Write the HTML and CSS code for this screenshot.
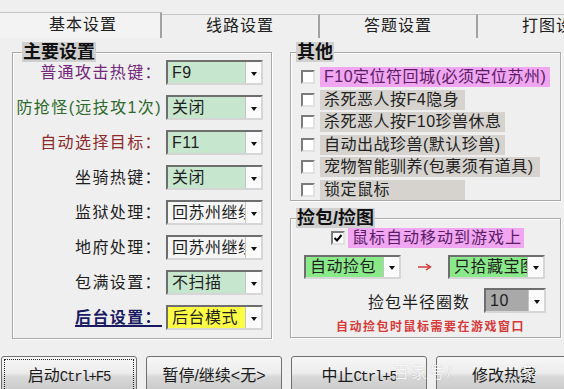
FILE: index.html
```html
<!DOCTYPE html>
<html lang="zh-CN">
<head>
<meta charset="utf-8">
<title>基本设置</title>
<link rel="stylesheet" href="styles.css">
</head>
<body>
<div class="tabs">
  <div class="tab active">基本设置</div>
  <div class="tab">线路设置</div>
  <div class="tab">答题设置</div>
  <div class="tab">打图设置</div>
</div>

<div class="panel">
  <section class="group main-group">
    <div class="group-title">主要设置</div>
    <div class="rows">
      <div class="row"><span class="lbl c-purple">普通攻击热键：</span><div class="combo green"><span class="val">F9</span><span class="drop"></span></div></div>
      <div class="row"><span class="lbl c-green">防抢怪(远技攻1次)</span><div class="combo green"><span class="val">关闭</span><span class="drop"></span></div></div>
      <div class="row"><span class="lbl c-red">自动选择目标：</span><div class="combo green"><span class="val">F11</span><span class="drop"></span></div></div>
      <div class="row"><span class="lbl">坐骑热键：</span><div class="combo green"><span class="val">关闭</span><span class="drop"></span></div></div>
      <div class="row"><span class="lbl">监狱处理：</span><div class="combo light"><span class="val">回苏州继续</span><span class="drop"></span></div></div>
      <div class="row"><span class="lbl">地府处理：</span><div class="combo light"><span class="val">回苏州继续</span><span class="drop"></span></div></div>
      <div class="row"><span class="lbl">包满设置：</span><div class="combo green"><span class="val">不扫描</span><span class="drop"></span></div></div>
      <div class="row"><span class="lbl c-navy">后台设置：</span><div class="combo yellow"><span class="val">后台模式</span><span class="drop"></span></div></div>
    </div>
  </section>

  <div class="right-col">
    <section class="group other-group">
      <div class="group-title small-indent">其他</div>
      <div class="checks">
        <div class="check"><span class="box"></span><span class="ctext pink w230">F10定位符回城(必须定位苏州)</span></div>
        <div class="check"><span class="box"></span><span class="ctext w145">杀死恶人按F4隐身</span></div>
        <div class="check"><span class="box"></span><span class="ctext w185">杀死恶人按F10珍兽休息</span></div>
        <div class="check"><span class="box"></span><span class="ctext w185">自动出战珍兽(默认珍兽)</span></div>
        <div class="check"><span class="box"></span><span class="ctext w220">宠物智能驯养(包裹须有道具)</span></div>
        <div class="check"><span class="box"></span><span class="ctext w145">锁定鼠标</span></div>
      </div>
    </section>

    <section class="group pick-group">
      <div class="group-title small-indent">捡包/捡图</div>
      <div class="check pick-check">
        <span class="box checked"><svg width="10" height="10" viewBox="0 0 10 10"><polyline points="1.5,5 4,7.5 8.5,2" fill="none" stroke="#000" stroke-width="2"/></svg></span>
        <span class="ctext pink w176">鼠标自动移动到游戏上</span>
      </div>
      <div class="combo-row">
        <div class="combo bright"><span class="val">自动捡包</span><span class="drop"></span></div>
        <span class="arrow"><svg width="14" height="8" viewBox="0 0 14 8"><line x1="0" y1="4" x2="12" y2="4" stroke="#d03030" stroke-width="1.4"/><polyline points="8,1 12.5,4 8,7" fill="none" stroke="#d03030" stroke-width="1.4"/></svg></span>
        <div class="combo bright"><span class="val">只拾藏宝图</span><span class="drop"></span></div>
      </div>
      <div class="radius-row">
        <span class="rlabel">捡包半径圈数</span>
        <div class="combo gray"><span class="val">10</span><span class="drop"></span></div>
      </div>
      <div class="note">自动捡包时鼠标需要在游戏窗口</div>
    </section>
  </div>
</div>

<div class="buttons">
  <div class="btn focused">启动<span class="mono">Ctrl+F5</span></div>
  <div class="btn">暂停/继续&lt;无&gt;</div>
  <div class="btn">中止<span class="mono">Ctrl+5</span></div>
  <div class="btn">修改热键</div>
</div>

<div class="watermark"><span>百家号/</span><span class="wm-end">家</span></div>
</body>
</html>
```

FILE: styles.css
```css
body {
  margin: 0;
  width: 564px;
  height: 389px;
  overflow: hidden;
  position: relative;
  background: #efefef;
  font-family: "Liberation Sans", "Noto Sans CJK SC", sans-serif;
  font-size: 16px;
  color: #1e1e1e;
}

/* tabs */
.tabs {
  display: flex;
  margin-top: 12px;
  height: 26px;
}
.tab {
  flex: 0 0 158px;
  box-sizing: border-box;
  margin-top: 2px;
  border-top: 1px solid #c4c4c4;
  border-right: 2px solid #a2a2a2;
  text-align: center;
  line-height: 22px;
  letter-spacing: 1px;
  color: #202020;
  white-space: nowrap;
  overflow: hidden;
}
.tab.active {
  flex-basis: 162px;
  margin-top: 0;
  padding-left: 6px;
  line-height: 24px;
  background: #f3f3f3;
}

/* panel */
.panel {
  display: flex;
  align-items: flex-start;
  gap: 18px;
  padding: 14px 0 0 12px;
}
.group {
  box-sizing: border-box;
  display: flex;
  flex-direction: column;
  border: 1px solid #a9a9a9;
  box-shadow: inset 1px 1px 0 #fff, 1px 1px 0 #fff;
}
.group-title {
  align-self: flex-start;
  margin: -11px 0 0 9px;
  height: 20px;
  line-height: 20px;
  padding: 0 1px;
  background: #d0d0d0;
  font-size: 18px;
  font-weight: bold;
  color: #111;
  white-space: nowrap;
}
.group-title.small-indent { margin-left: 5px; }

.main-group { width: 260px; height: 287px; }
.rows {
  display: flex;
  flex-direction: column;
  gap: 10px;
  margin-top: -2px;
}
.row {
  display: flex;
  align-items: center;
  height: 25px;
}
.lbl {
  width: 149px;
  text-align: right;
  letter-spacing: 1.4px;
  line-height: 20px;
  white-space: nowrap;
}
.c-purple { color: #74267a; }
.c-green { color: #2c6a2c; }
.c-red { color: #8c2a2a; }
.c-navy {
  color: #1a1a62;
  font-weight: bold;
  text-decoration: underline;
  text-decoration-thickness: 2px;
  text-underline-offset: 2px;
}

/* combo box */
.combo {
  box-sizing: border-box;
  display: flex;
  width: 97px;
  height: 25px;
  margin-left: 4px;
  border: 2px solid;
  border-color: #6e6e6e #d6d6d6 #d6d6d6 #6e6e6e;
  background: #f6f6f6;
}
.combo .val {
  flex: 1;
  overflow: hidden;
  white-space: nowrap;
  padding-left: 4px;
  line-height: 21px;
  letter-spacing: 0.5px;
}
.combo .drop {
  flex: 0 0 15px;
  display: flex;
  align-items: center;
  justify-content: center;
  background: #fbfbfb;
  border-left: 1px solid #c4c4c4;
}
.combo .drop::before {
  content: "";
  margin-top: 2px;
  border-left: 3px solid transparent;
  border-right: 3px solid transparent;
  border-top: 4px solid #111;
}
.combo.green { background: #c6e7cd; }
.combo.light { background: #f5f5f5; }
.combo.yellow { background: #fdfd46; }
.combo.bright { background: #8aea8a; margin-left: 0; height: 24px; }
.combo.gray { background: #a9a9a9; margin-left: 0; width: 62px; }
.combo.bright .val { line-height: 20px; }

/* right column */
.right-col {
  display: flex;
  flex-direction: column;
  gap: 17px;
  width: 271px;
}
.other-group { width: 271px; height: 149px; }
.checks {
  display: flex;
  flex-direction: column;
  gap: 2.6px;
  margin-top: 5px;
}
.check {
  display: flex;
  align-items: center;
  gap: 5px;
  height: 20px;
  padding-left: 10px;
}
.box {
  box-sizing: border-box;
  flex: 0 0 14px;
  width: 14px;
  height: 14px;
  display: flex;
  align-items: center;
  justify-content: center;
  background: #fff;
  border: 2px solid;
  border-color: #7c7c7c #e2e2e2 #e2e2e2 #7c7c7c;
}
.ctext {
  box-sizing: border-box;
  height: 20px;
  line-height: 20px;
  padding-left: 4px;
  background: #d6d3ce;
  color: #222;
  letter-spacing: 0.5px;
  white-space: nowrap;
  overflow: hidden;
}
.ctext.pink { background: #f0a6f0; color: #5c1c68; }
.w145 { width: 145px; }
.w176 { width: 176px; letter-spacing: 1px; }
.w185 { width: 185px; }
.w220 { width: 220px; }
.w230 { width: 230px; }

.pick-group { width: 271px; height: 120px; }
.pick-check { padding-left: 40px; gap: 3px; }
.combo-row {
  display: flex;
  align-items: center;
  margin-top: 7px;
  padding-left: 13px;
}
.arrow {
  width: 47px;
  display: flex;
  justify-content: center;
}
.radius-row {
  display: flex;
  align-items: center;
  justify-content: flex-end;
  gap: 14px;
  height: 25px;
  margin-top: 9px;
  padding-right: 14px;
}
.rlabel { letter-spacing: 1px; white-space: nowrap; }
.note {
  margin-top: 7px;
  padding-left: 10px;
  text-align: center;
  color: #d83a3a;
  font-size: 12px;
  font-weight: bold;
  letter-spacing: 1.5px;
  line-height: 14px;
  white-space: nowrap;
}

/* buttons */
.buttons {
  display: flex;
  gap: 9px;
  margin-top: 17px;
  padding-left: 1px;
}
.btn {
  box-sizing: border-box;
  flex: 0 0 136px;
  height: 40px;
  padding-top: 9px;
  display: flex;
  justify-content: center;
  align-items: baseline;
  line-height: 20px;
  border: 1px solid #707070;
  border-radius: 3px;
  background: linear-gradient(#f7f7f7 0%, #ececec 42%, #d8d8d8 52%, #c6c6c6 100%);
  color: #1a1a1a;
  white-space: nowrap;
}
.btn.focused {
  outline: 1px dotted #222;
  outline-offset: -4px;
}
.mono {
  font-family: "Liberation Mono", monospace;
  font-size: 14px;
  letter-spacing: -1.2px;
}

.watermark {
  position: absolute;
  left: 393px;
  top: 363px;
  display: flex;
  color: rgba(255, 255, 255, 0.9);
  text-shadow: 0 0 1px rgba(0, 0, 0, 0.25);
  letter-spacing: 2px;
  line-height: 20px;
  pointer-events: none;
}
.wm-end { margin-left: 67px; }
```
